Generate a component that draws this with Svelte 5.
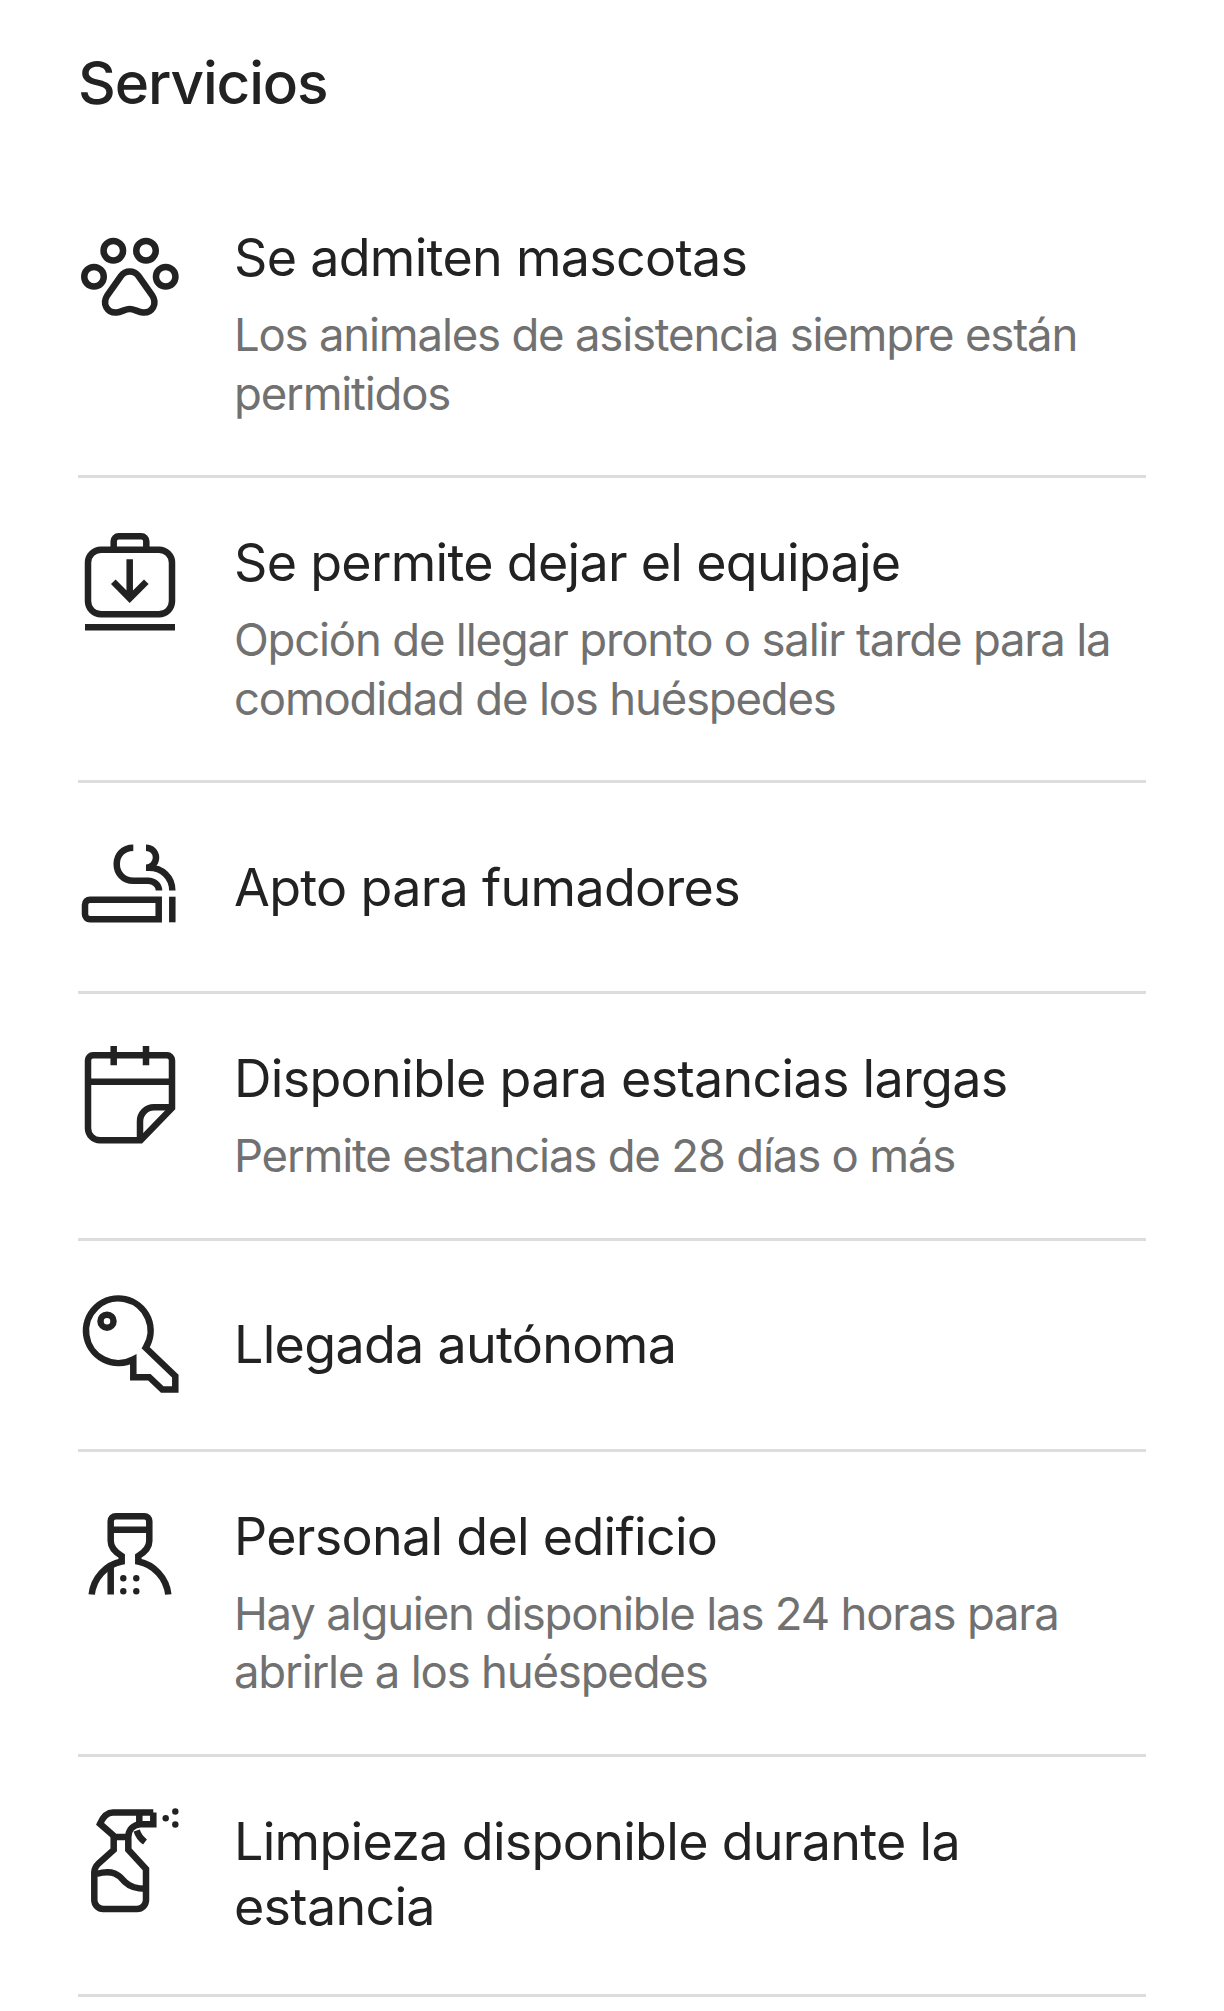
<script lang="ts">
	const services = [
		{ id: 'pets', title: 'Se admiten mascotas', note: 'Los animales de asistencia siempre están permitidos' },
		{ id: 'luggage', title: 'Se permite dejar el equipaje', note: 'Opción de llegar pronto o salir tarde para la comodidad de los huéspedes' },
		{ id: 'smoking', title: 'Apto para fumadores' },
		{ id: 'calendar', title: 'Disponible para estancias largas', note: 'Permite estancias de 28 días o más' },
		{ id: 'key', title: 'Llegada autónoma' },
		{ id: 'staff', title: 'Personal del edificio', note: 'Hay alguien disponible las 24 horas para abrirle a los huéspedes' },
		{ id: 'cleaning', title: 'Limpieza disponible durante la estancia' }
	];
</script>

<main class="page">
	<h2>Servicios</h2>
	<ul>
		{#each services as service (service.id)}
			<li class="row">
				<svg class="icon" viewBox="0 0 104 104" aria-hidden="true">
					{#if service.id === 'pets'}
						<circle cx="35.3" cy="23.7" r="9.75" />
						<circle cx="68" cy="23.7" r="9.75" />
						<circle cx="16" cy="49.7" r="9.75" />
						<circle cx="87.7" cy="49.7" r="9.75" />
						<path d="M43 49C47.5 43 56 43 60.5 49L74 68C80 77 74 86 65 85.5C60 85 56 82 51.7 82C47.5 82 43.5 85 38.5 85.5C29.5 86 23.5 77 29.5 68Z" />
					{:else if service.id === 'luggage'}
						<rect x="10" y="17.7" width="84" height="64.6" rx="13" />
						<path d="M35.7 17.7V9.3a5 5 0 0 1 5-5H63.3a5 5 0 0 1 5 5V17.7" />
						<path d="M51.7 27.3V66.3M35.3 49.7L51.7 66.3L68.3 49.7" />
						<path d="M7 95.3H97" />
					{:else if service.id === 'smoking'}
						<path d="M12 62.7H80.7V82.3H12a5 5 0 0 1-5-5V67.7a5 5 0 0 1 5-5Z" />
						<path d="M94.3 59.7V85.3" />
						<path d="M55.3 10.7C45 10.7 38.7 18 38.7 27C38.7 36 45 43.7 55.3 43.7H70C76 43.7 81 48 81 53.5" />
						<path d="M68 10.7C73.5 10.7 78 15 78 20.5C78 26 73.5 30.7 68 30.7H71C84 30.7 94.3 40 94.3 53.5" />
					{:else if service.id === 'calendar'}
						<path d="M15 7.3H89a5 5 0 0 1 5 5V60L62.7 92.3H22a12 12 0 0 1-12-12V12.3a5 5 0 0 1 5-5Z" />
						<path d="M35.7 -2V17.3M68 -2V17.3M10 33.7H94" />
						<path d="M94 59.3H76a14 14 0 0 0-14 14V92.3" />
					{:else if service.id === 'key'}
						<path d="M55.3 64.3A32.3 32.3 0 1 1 67.7 52.8L97.3 81.2V94.5H84.3L71.3 82.2H55.3Z" />
						<circle cx="29" cy="26.2" r="6.5" />
					{:else if service.id === 'staff'}
						<path d="M13.7 88.5C15.5 72 28 58.5 43.7 55.5V50C37 46 32.7 42 32.7 35V15.2a5 5 0 0 1 5-5H66.3a5 5 0 0 1 5 5V35C71.3 42 67 46 60.3 50V55.5C76 58.5 88.5 72 90.3 88.5" />
						<path d="M32.7 23.8H71.3M32.7 59.5V88.5" />
						<circle class="dot" cx="45.3" cy="72.2" r="3.2" />
						<circle class="dot" cx="58.3" cy="72.2" r="3.2" />
						<circle class="dot" cx="45.3" cy="85.2" r="3.2" />
						<circle class="dot" cx="58.3" cy="85.2" r="3.2" />
					{:else}
						<path d="M75.3 1.5H35C29 1.5 25 6 22 12.8L37 26H48.7" />
						<path d="M35.7 26V38.8L21 52C18 55 16.3 57 16.3 61V89a9 9 0 0 0 9 9H59a9 9 0 0 0 9-9V58L50.3 38.8V26C50.3 19 55 14 62 13.2H75.3V1.5" />
						<path d="M61.3 1.5V13.2M58.7 19.5C60 24 63 28 67 31" />
						<path d="M18.7 62.8C38 58 42 66 47 71C52 76 59 77.8 68 77.8" />
						<circle class="dot" cx="87.7" cy="7.2" r="3.2" />
						<circle class="dot" cx="97.3" cy="0.5" r="3.2" />
						<circle class="dot" cx="97.3" cy="13.5" r="3.2" />
					{/if}
				</svg>
				<div class="text">
					<p class="title">{service.title}</p>
					{#if service.note}
						<p class="note">{service.note}</p>
					{/if}
				</div>
			</li>
		{/each}
	</ul>
</main>

<style>
	:global(body) {
		background: #fff;
	}

	.page {
		height: 2011px;
		box-sizing: border-box;
		padding: 44px 78px 0;
		overflow: hidden;
		color: #222;
		font-family: Inter, 'Liberation Sans', sans-serif;
	}

	h2 {
		margin: 0 0 51px;
		font-size: 58.5px;
		line-height: 78px;
		font-weight: 500;
		letter-spacing: -1.1px;
	}

	ul {
		margin: 0;
		padding: 0;
		list-style: none;
	}

	.row {
		display: flex;
		align-items: flex-start;
		gap: 52px;
		padding: 52px 0;
		border-bottom: 3px solid #ddd;
	}

	.row:last-child {
		padding-bottom: 55px;
	}

	.icon {
		flex: 0 0 104px;
		width: 104px;
		height: 104px;
		margin: 2px 0 -2px;
		overflow: visible;
		fill: none;
		stroke: #222;
		stroke-width: 6.5;
	}

	.dot {
		fill: #222;
		stroke: none;
	}

	.text {
		flex: 1;
		min-width: 0;
		align-self: center;
	}

	p {
		margin: 0;
	}

	.title {
		font-size: 52px;
		line-height: 65px;
		letter-spacing: -0.7px;
	}

	.note {
		margin-top: 16px;
		font-size: 45.5px;
		line-height: 58.5px;
		letter-spacing: -1.2px;
		color: #717171;
	}
</style>
